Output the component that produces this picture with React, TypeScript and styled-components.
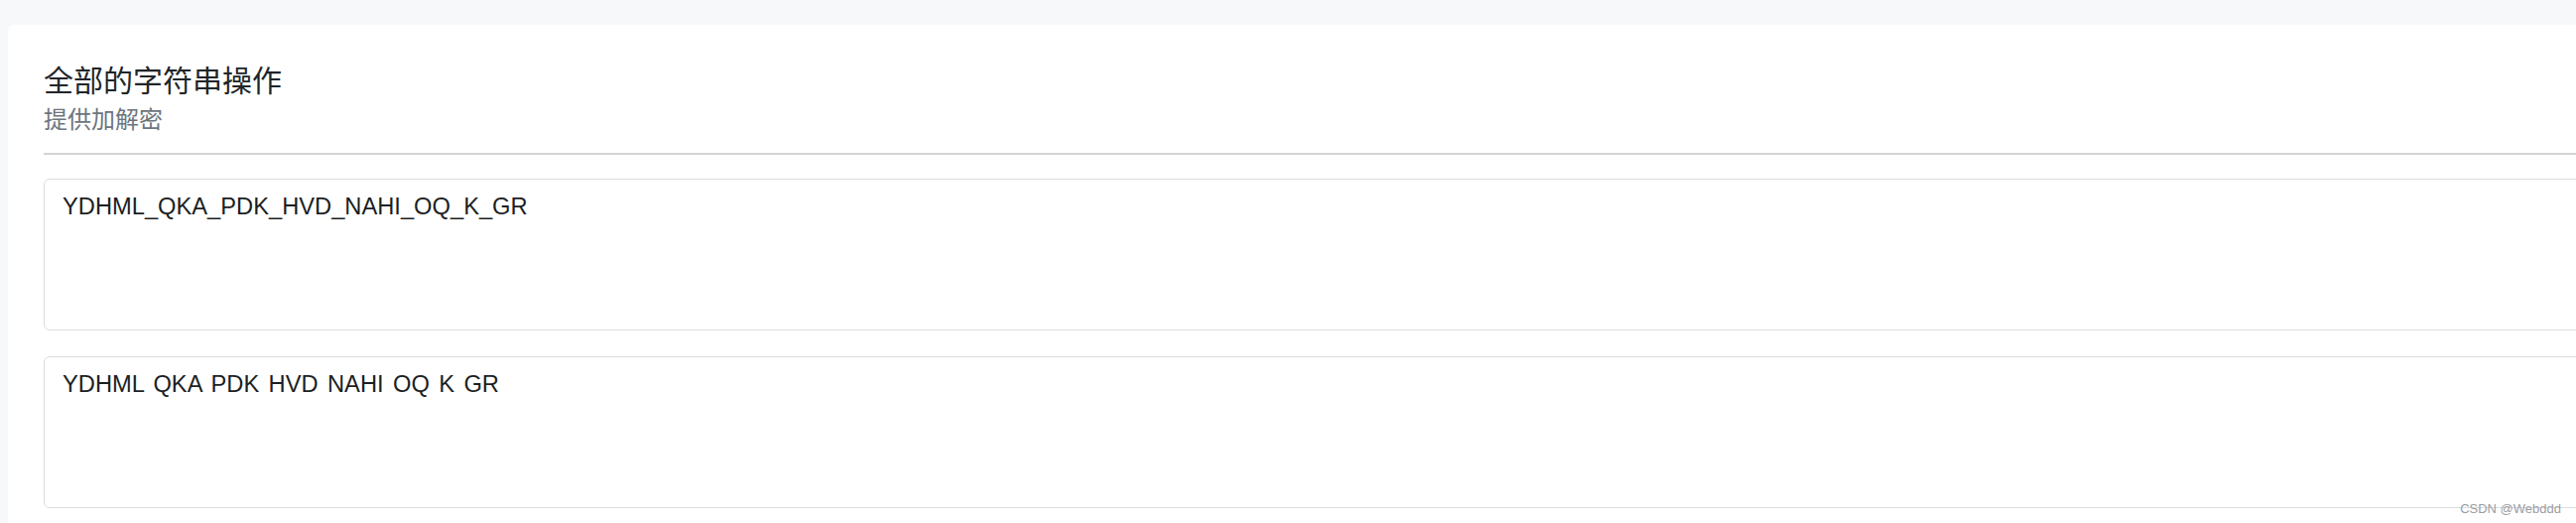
import React from "react";
import styled, { createGlobalStyle } from "styled-components";

const GlobalStyle = createGlobalStyle`
  html, body {
    margin: 0;
    padding: 0;
    background: #f7f8fa;
    overflow: hidden;
  }
  body {
    font-family: "Liberation Sans", "Noto Sans CJK SC", Arial, sans-serif;
    color: #212529;
  }
  #root {
    position: relative;
    width: 2596px;
    height: 527px;
    overflow: hidden;
  }
`;

const Page = styled.div`
  padding-top: 25px;
  padding-left: 8px;
  width: 2596px;
  box-sizing: border-box;
`;

const Card = styled.section`
  width: 2800px;
  min-height: 560px;
  background: #ffffff;
  border-radius: 6px;
  padding: 36px 36px;
  box-sizing: border-box;
`;

const Title = styled.h5`
  margin: 0 0 4px 0;
  font-family: "Noto Sans CJK SC", "Liberation Sans", sans-serif;
  font-size: 30px;
  font-weight: 400;
  line-height: 36px;
  color: #212529;
`;

const Subtitle = styled.div`
  font-family: "Noto Sans CJK SC", "Liberation Sans", sans-serif;
  font-size: 24px;
  line-height: 36px;
  color: #6c757d;
`;

const Rule = styled.hr`
  margin: 17px 0 24px 0;
  border: 0;
  border-top: 2px solid #d3d3d3;
  height: 0;
`;

const Field = styled.textarea<{ $gap?: number }>`
  display: block;
  width: 100%;
  height: 153px;
  box-sizing: border-box;
  margin: 0 0 ${(p) => p.$gap ?? 26}px 0;
  padding: 9px 18px;
  font-family: "Liberation Sans", Arial, sans-serif;
  font-size: 23.7px;
  word-spacing: 2.8px;
  line-height: 36px;
  color: #1c1f23;
  background: #ffffff;
  border: 1.5px solid #dadde1;
  border-radius: 6px;
  resize: none;
  outline: none;
`;

const Watermark = styled.span`
  position: absolute;
  right: 15px;
  top: 505px;
  font-family: "Liberation Sans", Arial, sans-serif;
  font-size: 13px;
  line-height: 16px;
  color: #9a9da3;
`;

export default function App() {
  return (
    <>
      <GlobalStyle />
      <Page>
        <Card>
          <Title>全部的字符串操作</Title>
          <Subtitle>提供加解密</Subtitle>
          <Rule />
          <Field readOnly defaultValue="YDHML_QKA_PDK_HVD_NAHI_OQ_K_GR" />
          <Field readOnly $gap={0} defaultValue="YDHML QKA PDK HVD NAHI OQ K GR" />
        </Card>
      </Page>
      <Watermark>CSDN @Webddd</Watermark>
    </>
  );
}
